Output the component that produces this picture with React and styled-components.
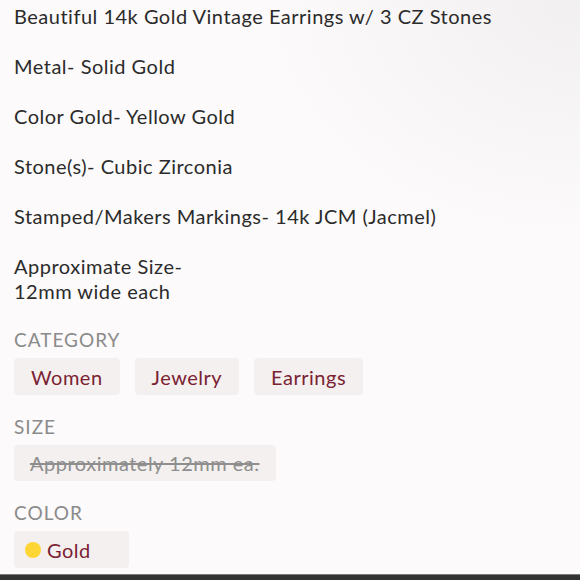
import React from "react";
import styled, { createGlobalStyle } from "styled-components";

const Global = createGlobalStyle`
  html, body { margin: 0; padding: 0; }
  body {
    background: #fcfafa;
    font-family: "Lato", "Liberation Sans", sans-serif;
    -webkit-font-smoothing: antialiased;
  }
`;

const Page = styled.div`
  min-height: 580px;
  box-sizing: border-box;
  padding: 4px 14px 0;
  background: radial-gradient(ellipse 320px 240px at 100% 0%, rgba(0,0,0,0.045), rgba(0,0,0,0) 100%);
`;

const Description = styled.div`
  font-size: 20px;
  line-height: 25px;
  letter-spacing: 0.5px;
  color: #2b2b2b;
  white-space: pre-line;
`;

const Section = styled.section`
  margin-top: ${(p) => p.$top}px;
`;

const Label = styled.div`
  font-size: 19px;
  line-height: 24px;
  color: #8b8b8b;
  text-transform: uppercase;
  letter-spacing: 1px;
`;

const ChipRow = styled.div`
  display: flex;
  gap: 15px;
  margin-top: 6px;
`;

const Chip = styled.div`
  display: flex;
  align-items: center;
  gap: 6px;
  height: ${(p) => p.$h || 37}px;
  box-sizing: border-box;
  padding: ${(p) => p.$pad || "0 17px"};
  background: #f4f0ef;
  border-radius: 4px;
  font-size: 20px;
  letter-spacing: 0.5px;
  color: ${(p) => (p.$muted ? "#8e8e8e" : "#7a2232")};
  text-decoration: ${(p) => (p.$strike ? "line-through" : "none")};
`;

const Dot = styled.span`
  width: 16px;
  height: 16px;
  border-radius: 50%;
  background: ${(p) => p.$color};
  flex: none;
`;

const BottomBar = styled.div`
  position: fixed;
  left: 0;
  right: 0;
  bottom: 0;
  height: 5px;
  background: #333;
  border-top: 1px solid #7c7c7c;
`;

const text = `Beautiful 14k Gold Vintage Earrings w/ 3 CZ Stones

Metal- Solid Gold

Color Gold- Yellow Gold

Stone(s)- Cubic Zirconia

Stamped/Makers Markings- 14k JCM (Jacmel)

Approximate Size-
12mm wide each`;

export default function App() {
  return (
    <Page>
      <Global />
      <Description>{text}</Description>
      <Section $top={24}>
        <Label>Category</Label>
        <ChipRow>
          <Chip>Women</Chip>
          <Chip>Jewelry</Chip>
          <Chip>Earrings</Chip>
        </ChipRow>
      </Section>
      <Section $top={20}>
        <Label>Size</Label>
        <ChipRow>
          <Chip $h={36} $pad="0 17px 0 16px" $muted $strike>Approximately 12mm ea.</Chip>
        </ChipRow>
      </Section>
      <Section $top={20}>
        <Label>Color</Label>
        <ChipRow>
          <Chip $pad="0 38px 0 11px">
            <Dot $color="#fdd535" />
            Gold
          </Chip>
        </ChipRow>
      </Section>
      <BottomBar />
    </Page>
  );
}
